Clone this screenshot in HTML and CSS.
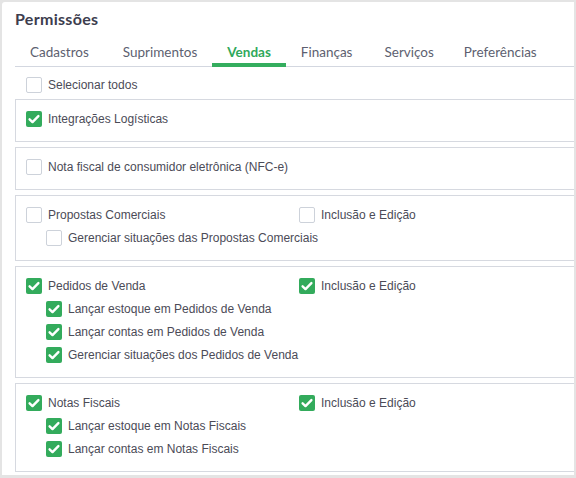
FILE: index.html
```html
<!DOCTYPE html>
<html lang="pt-BR">
<head>
<meta charset="utf-8">
<link rel="stylesheet" href="styles.css">
</head>
<body>
<div class="panel">
  <h1 class="title">Permissões</h1>
  <nav class="tabs">
    <span class="tab">Cadastros</span>
    <span class="tab">Suprimentos</span>
    <span class="tab active">Vendas</span>
    <span class="tab">Finanças</span>
    <span class="tab">Serviços</span>
    <span class="tab">Preferências</span>
  </nav>
  <label class="row select-all"><span class="cb"></span>Selecionar todos</label>

  <section class="box">
    <label class="row"><span class="cb on"></span>Integrações Logísticas</label>
  </section>

  <section class="box">
    <label class="row"><span class="cb"></span>Nota fiscal de consumidor eletrônica (NFC-e)</label>
  </section>

  <section class="box">
    <div class="cols">
      <div class="col-main">
        <label class="row"><span class="cb"></span>Propostas Comerciais</label>
        <label class="row sub"><span class="cb"></span>Gerenciar situações das Propostas Comerciais</label>
      </div>
      <label class="row"><span class="cb"></span>Inclusão e Edição</label>
    </div>
  </section>

  <section class="box">
    <div class="cols">
      <div class="col-main">
        <label class="row"><span class="cb on"></span>Pedidos de Venda</label>
        <label class="row sub"><span class="cb on"></span>Lançar estoque em Pedidos de Venda</label>
        <label class="row sub"><span class="cb on"></span>Lançar contas em Pedidos de Venda</label>
        <label class="row sub"><span class="cb on"></span>Gerenciar situações dos Pedidos de Venda</label>
      </div>
      <label class="row"><span class="cb on"></span>Inclusão e Edição</label>
    </div>
  </section>

  <section class="box">
    <div class="cols">
      <div class="col-main">
        <label class="row"><span class="cb on"></span>Notas Fiscais</label>
        <label class="row sub"><span class="cb on"></span>Lançar estoque em Notas Fiscais</label>
        <label class="row sub"><span class="cb on"></span>Lançar contas em Notas Fiscais</label>
      </div>
      <label class="row"><span class="cb on"></span>Inclusão e Edição</label>
    </div>
  </section>
</div>
</body>
</html>
```

FILE: styles.css
```css
html, body {
  margin: 0;
  padding: 0;
  background: #e4e4e4;
  overflow: hidden;
}
body {
  width: 576px;
  height: 478px;
  font-family: "Liberation Sans", Arial, sans-serif;
}
.panel {
  margin: 2px 2px 0 2px;
  height: 473px;
  background: #fff;
  border-top-left-radius: 3px;
  padding: 0 0 0 13px;
  box-sizing: border-box;
  overflow: hidden;
}
.title {
  margin: 0;
  padding-top: 8px;
  height: 26px;
  font-family: "Lato", sans-serif;
  font-weight: 700;
  font-size: 16px;
  line-height: 18px;
  color: #3d3d4e;
  letter-spacing: 0.3px;
}
.tabs {
  display: flex;
  height: 30px;
  border-bottom: 1px solid #d3d7e0;
}
.tab {
  display: block;
  height: 30px;
  padding-top: 6px;
  line-height: 21px;
  font-family: "Lato", sans-serif;
  font-size: 13.5px;
  color: #5d5f70;
  box-sizing: border-box;
}
.tab:nth-child(1) { padding-left: 15px; padding-right: 15px; }
.tab:nth-child(2) { padding-left: 19px; padding-right: 15px; }
.tab:nth-child(3) { padding-left: 15px; padding-right: 15px; }
.tab:nth-child(4) { padding-left: 15px; padding-right: 17px; }
.tab:nth-child(5) { padding-left: 15px; padding-right: 15px; }
.tab:nth-child(6) { padding-left: 15px; }
.tab.active {
  color: #2fa85a;
  font-weight: 700;
  border-bottom: 4px solid #34ad5e;
  margin-bottom: -1px;
  height: 31px;
}
.row {
  display: flex;
  align-items: center;
  height: 23px;
  font-size: 12px;
  color: #4b4b57;
  white-space: nowrap;
}
.select-all {
  height: 29px;
  padding-top: 3px;
  padding-left: 11px;
}
.cb {
  width: 16px;
  height: 16px;
  box-sizing: border-box;
  border: 1.5px solid #cdd2da;
  border-radius: 2px;
  margin-right: 6px;
  flex: none;
  background: #fff;
}
.cb.on {
  border: none;
  background: #33ab5c url("data:image/svg+xml;utf8,<svg xmlns='http://www.w3.org/2000/svg' width='16' height='16' viewBox='0 0 16 16'><path d='M3.6 8.3l2.9 2.8 5.9-6' fill='none' stroke='white' stroke-width='2.4' stroke-linecap='round' stroke-linejoin='round'/></svg>") no-repeat center;
}
.box {
  border: 1px solid #d6d9e0;
  border-right: none;
  margin-bottom: 5px;
  padding: 7px 0 11px 10px;
  width: 600px;
}
.cols {
  display: flex;
}
.col-main {
  width: 273px;
}
.sub {
  padding-left: 20px;
}
```
